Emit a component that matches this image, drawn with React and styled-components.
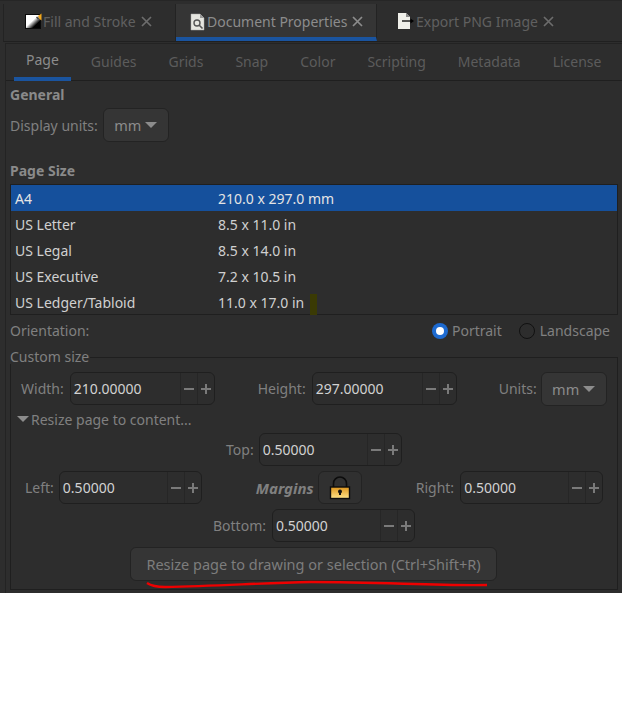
import React from "react";
import styled, { createGlobalStyle } from "styled-components";

const Global = createGlobalStyle`
  html, body { margin: 0; padding: 0; background: #fff; }
  body { font-family: "Noto Sans", "Open Sans", sans-serif; font-size: 14px; }
  * { box-sizing: border-box; }
`;
const Window = styled.div`
  position: relative; width: 622px; height: 593px; background: #2d2d2d; padding-top: 3px;
  border-top: 1px solid #262626; overflow: hidden; color: #8b8b8b;
`;
const TabBar = styled.div`
  display: flex; height: 38px; margin-left: 3px; border-left: 1px solid #232323; border-bottom: 1px solid #202020;
`;
const Tab = styled.div`
  display: flex; align-items: center; height: 37px; width: ${p => p.$w}px; padding-left: ${p => p.$pad}px;
  background: ${p => p.$active ? "#353535" : "#2d2d2d"};
  border-right: ${p => p.$active || p.$sep ? "1px solid #232323" : "none"};
  border-bottom: ${p => p.$active ? "4px solid #1a549f" : "none"};
  color: ${p => p.$active ? "#8c8c8c" : "#606060"};
  padding-bottom: ${p => p.$active ? "0" : "3px"};
  padding-top: ${p => p.$active ? "2px" : "0"};
  font-size: 14px; white-space: nowrap;
`;
const TabIcon = styled.svg`width: 18px; height: 18px; flex: none; margin-right: ${p => p.$gap || 0}px;`;
const Close = styled.span`margin-left: 5px; color: ${p => p.$active ? "#8c8c8c" : "#6c6c6c"}; display: flex;`;
const Notebook = styled.div`
  height: 551px; margin: 1px 0 0 5px; border-left: 1px solid #232323; border-top: 1px solid #232323;
`;
const SubTabs = styled.div`
  display: flex; gap: 8px; height: 37px; border-bottom: 1px solid #1f1f1f; padding-left: 8px;
`;
const SubTab = styled.div`
  padding: 0 12px 3px; height: 37px; display: flex; align-items: center; flex: none;
  color: ${p => p.$active ? "#8c8c8c" : "#5c5c5c"}; font-size: 14px;
  border-bottom: ${p => p.$active ? "4px solid #1a549f" : "none"};
`;
const Content = styled.div`padding: 4px 4px 0 4px; display: flex; flex-direction: column;`;
const Heading = styled.div`
  font-weight: 700; font-size: 14px; color: #8a8a8a; height: 20px; line-height: 20px;
  margin-top: ${p => p.$mt || 0}px;
`;
const UnitsRow = styled.div`display: flex; align-items: center; gap: 5px; margin-top: 3px; height: 34px;`;
const Label = styled.span`
  color: #808080; font-size: 14px; white-space: nowrap;
  margin-left: ${p => p.$ml || 0}px; margin-right: ${p => p.$mr || 0}px;
`;
const Combo = styled.div`
  width: 66px; height: 34px; border: 1px solid #232323; border-radius: 6px; background: #353535; flex: none;
  display: flex; align-items: center; justify-content: center; gap: 4px; color: #8c8c8c; font-size: 14.5px;
`;
const Caret = styled.span`
  width: 0; height: 0; border-left: 6px solid transparent; border-right: 6px solid transparent; border-top: 6px solid #8c8c8c;
`;
const List = styled.div`
  position: relative; width: 608px; height: 131px; margin-top: 3px; border: 1px solid #1f1f1f; background: #2d2d2d;
`;
const ListRow = styled.div`
  display: flex; height: 26px; align-items: center; padding-left: 4px; font-size: 14px;
  background: ${p => p.$sel ? "#15509c" : "transparent"};
  color: ${p => p.$sel ? "#e4e4e4" : "#d0d0d0"};
`;
const Name = styled.span`width: 203px; flex: none;`;
const Mark = styled.span`
  position: absolute; left: 299px; top: 109px; width: 7px; height: 21px; background: #3a3a04;
`;
const OrientRow = styled.div`
  display: flex; align-items: center; height: 34px; padding: 0 8px 3px 0;
`;
const Spacer = styled.div`flex: 1;`;
const Radio = styled.span`
  width: 16px; height: 16px; border-radius: 50%; flex: none; margin-right: ${p => p.$mr || 4}px; margin-left: ${p => p.$ml || 0}px;
  ${p => p.$on
    ? "background:#1d6ad0; display:flex; align-items:center; justify-content:center;"
    : "background:#2d2d2d; border:1px solid #111;"}
`;
const Dot = styled.span`width: 8px; height: 8px; border-radius: 50%; background: #fff;`;
const Frame = styled.fieldset`
  margin: 1px 0 0; padding: 0 10px; width: 608px; height: 240px; border: 1px solid #1f1f1f; min-width: 0;
`;
const Legend = styled.legend`padding: 0 1px 0 0; color: #808080; font-size: 14px; line-height: 14px; margin-left: -11px;`;
const SizeRow = styled.div`display: flex; align-items: center; height: 33px; margin-top: 8px;`;
const Spin = styled.div`
  display: flex; width: ${p => p.$w || 145}px; height: 33px; border: 1px solid #1f1f1f; border-radius: 6px; overflow: hidden; flex: none;
  background: #2d2d2d;
`;
const SpinValue = styled.div`flex: 1; color: #d2d2d2; font-size: 14px; display: flex; align-items: center; padding-left: 3px;`;
const SpinBtn = styled.div`
  width: 17px; display: flex; align-items: center; justify-content: center; border-left: 1px solid #262626; color: #7a7a7a;
`;
const Expander = styled.div`
  display: flex; align-items: center; gap: 2px; height: 20px; margin: 4px 0 0 -4px; color: #808080; font-size: 14px;
`;
const MarginRow = styled.div`display: flex; align-items: center; height: 33px; margin-top: ${p => p.$mt || 5}px; padding-left: ${p => p.$pl}px;`;
const MarginsTitle = styled.span`font-weight: 700; font-style: italic; color: #808080; font-size: 15px; margin-left: 54px;`;
const LockBtn = styled.div`
  width: 44px; height: 33px; margin-left: 4px; border: 1px solid #232323; border-radius: 6px; background: #303030;
  display: flex; align-items: center; justify-content: center; flex: none;
`;
const Action = styled.div`
  width: 367px; height: 34px; margin: 5px 0 0 109px; border: 1px solid #232323; border-radius: 6px; background: #353535;
  display: flex; align-items: center; justify-content: center; color: #7d7d7d; font-size: 14.5px; white-space: nowrap;
`;
const Scribble = styled.svg`position: absolute; left: 140px; top: 574px; width: 360px; height: 16px; pointer-events: none;`;

const X = () => (
  <svg width="11" height="11" viewBox="0 0 11 11" fill="none" stroke="currentColor" strokeWidth="1.7">
    <path d="M1 1l9 9M10 1l-9 9" />
  </svg>
);
const Minus = () => <svg width="12" height="12" viewBox="0 0 12 12" stroke="currentColor" strokeWidth="2"><path d="M1 6h10" /></svg>;
const Plus = () => <svg width="12" height="12" viewBox="0 0 12 12" stroke="currentColor" strokeWidth="2"><path d="M1 6h10M6 1v10" /></svg>;

const SpinBox = ({ value, w }) => (
  <Spin $w={w}>
    <SpinValue>{value}</SpinValue>
    <SpinBtn><Minus /></SpinBtn>
    <SpinBtn><Plus /></SpinBtn>
  </Spin>
);

const FillIcon = () => (
  <TabIcon viewBox="0 0 18 18">
    <defs>
      <linearGradient id="fs" x1="0" y1="0" x2="1" y2="1">
        <stop offset="0.45" stopColor="#fff" />
        <stop offset="0.72" stopColor="#000" />
      </linearGradient>
    </defs>
    <rect x="0.5" y="2.5" width="15" height="14" fill="url(#fs)" stroke="#0a0a0a" />
    <path d="M13 4l3.5-2.5V8.5L14.5 7z" fill="#f2a81d" />
    <path d="M12 4.5l2 2-1 1-2-2z" fill="#444" />
  </TabIcon>
);
const DocIcon = () => (
  <TabIcon viewBox="0 0 18 18">
    <path d="M2 1h9l4 4v12H2z" fill="#e6e6e0" stroke="#aaa" strokeWidth=".5" />
    <path d="M11 1v4h4z" fill="#999" />
    <circle cx="8" cy="10" r="3" fill="none" stroke="#555" strokeWidth="1.4" />
    <path d="M10 12l3.5 3.5" stroke="#555" strokeWidth="1.6" />
  </TabIcon>
);
const ExportIcon = () => (
  <TabIcon viewBox="0 0 18 18" $gap={1}>
    <path d="M1 1h8l4 4v12H1z" fill="#f0f0ea" />
    <path d="M9 1v4h4z" fill="#8a8a8a" />
    <path d="M5 9h10" stroke="#000" strokeWidth="1.3" />
    <path d="M13.5 6.5L17 9l-3.5 2.5z" fill="#000" />
  </TabIcon>
);
const LockIcon = () => (
  <svg width="22" height="24" viewBox="0 0 22 24">
    <defs>
      <linearGradient id="lk" x1="0" y1="0" x2="0" y2="1">
        <stop offset="0" stopColor="#dc941c" />
        <stop offset="1" stopColor="#ffe48a" />
      </linearGradient>
    </defs>
    <path d="M4.5 11V7.5a6.5 6.5 0 0 1 13 0V11" fill="none" stroke="#0c0c0c" strokeWidth="1.6" />
    <rect x="1.5" y="11" width="19" height="11.5" fill="url(#lk)" stroke="#0c0c0c" strokeWidth="1.4" />
    <circle cx="11" cy="15.5" r="2" fill="#111" />
    <path d="M10 15.5h2v3.5h-2z" fill="#111" />
  </svg>
);

const sizes = [
  ["A4", "210.0 x 297.0 mm"],
  ["US Letter", "8.5 x 11.0 in"],
  ["US Legal", "8.5 x 14.0 in"],
  ["US Executive", "7.2 x 10.5 in"],
  ["US Ledger/Tabloid", "11.0 x 17.0 in"],
];
const subTabs = ["Page", "Guides", "Grids", "Snap", "Color", "Scripting", "Metadata", "License"];

export default function App() {
  return (
    <>
      <Global />
      <Window>
        <TabBar>
          <Tab $w={172} $pad={21} $sep><FillIcon /><span>Fill and Stroke</span><Close><X /></Close></Tab>
          <Tab $w={201} $pad={13} $active><DocIcon /><span>Document Properties</span><Close $active><X /></Close></Tab>
          <Tab $w={240} $pad={20}><ExportIcon /><span>Export PNG Image</span><Close><X /></Close></Tab>
        </TabBar>
        <Notebook>
          <SubTabs>
            {subTabs.map((t, i) => <SubTab key={t} $active={i === 0}>{t}</SubTab>)}
          </SubTabs>
          <Content>
            <Heading>General</Heading>
            <UnitsRow>
              <Label>Display units:</Label>
              <Combo>mm<Caret /></Combo>
            </UnitsRow>
            <Heading $mt={19}>Page Size</Heading>
            <List>
              {sizes.map(([n, s], i) => <ListRow key={n} $sel={i === 0}><Name>{n}</Name><span>{s}</span></ListRow>)}
              <Mark />
            </List>
            <OrientRow>
              <Label>Orientation:</Label>
              <Spacer />
              <Radio $on><Dot /></Radio><Label>Portrait</Label>
              <Radio $ml={17} $mr={5} /><Label>Landscape</Label>
            </OrientRow>
            <Frame>
              <Legend>Custom size</Legend>
              <SizeRow>
                <Label $mr={6}>Width:</Label>
                <SpinBox value="210.00000" />
                <Label $ml={43} $mr={6}>Height:</Label>
                <SpinBox value="297.00000" />
                <Label $ml={42} $mr={4}>Units:</Label>
                <Combo>mm<Caret /></Combo>
              </SizeRow>
              <Expander><Caret />Resize page to content...</Expander>
              <MarginRow $pl={205} $mt={4}>
                <Label $mr={5}>Top:</Label>
                <SpinBox value="0.50000" w={143} />
              </MarginRow>
              <MarginRow $pl={4}>
                <Label $mr={5}>Left:</Label>
                <SpinBox value="0.50000" w={143} />
                <MarginsTitle>Margins</MarginsTitle>
                <LockBtn><LockIcon /></LockBtn>
                <Label $ml={54} $mr={6}>Right:</Label>
                <SpinBox value="0.50000" w={143} />
              </MarginRow>
              <MarginRow $pl={192}>
                <Label $mr={6}>Bottom:</Label>
                <SpinBox value="0.50000" w={143} />
              </MarginRow>
              <Action>Resize page to drawing or selection (Ctrl+Shift+R)</Action>
            </Frame>
          </Content>
        </Notebook>
        <Scribble viewBox="0 0 360 16" fill="none">
          <path d="M7 8C10 10 14 12 25 12C80 11 120 8 171 7C240 7 300 11 347 10" stroke="#ee0000" strokeWidth="2.4" />
        </Scribble>
      </Window>
    </>
  );
}
